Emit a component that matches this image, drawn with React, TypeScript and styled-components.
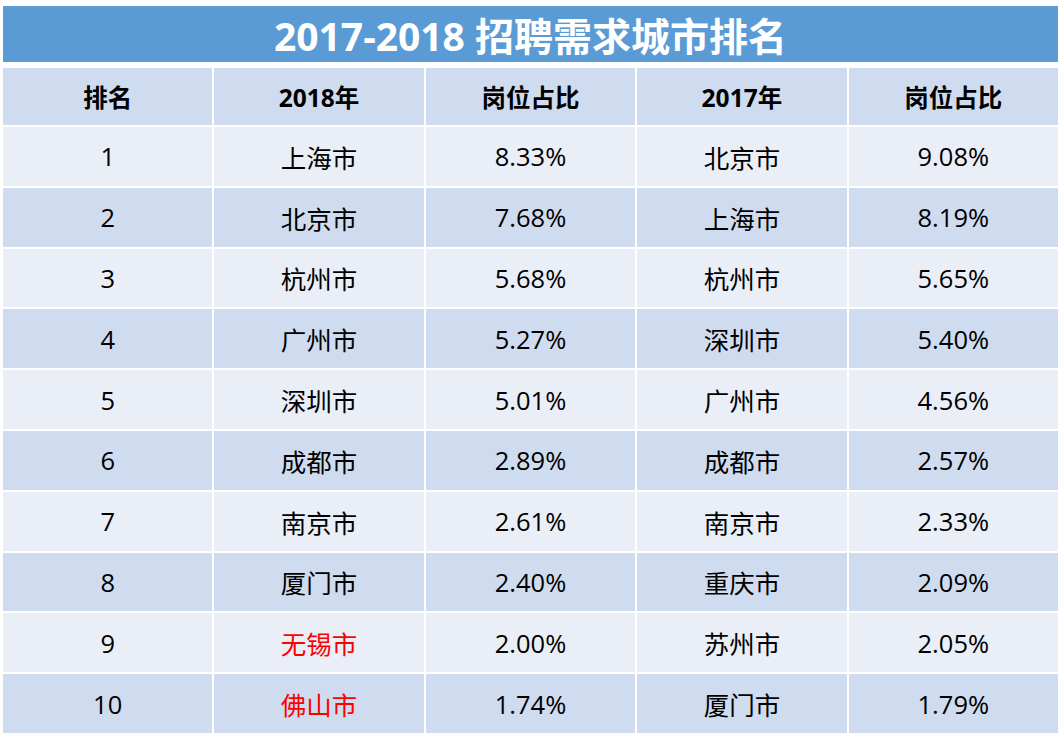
import styled, { createGlobalStyle } from "styled-components";

const GlobalStyle = createGlobalStyle`
  body {
    margin: 0;
    background: #ffffff;
    font-family: "Open Sans", "Noto Sans CJK SC", sans-serif;
  }
`;

// Whole page: title bar on top of the ranking table
const Page = styled.div`
  width: 1055px;
  padding: 6px 0 0 3px;
  display: flex;
  flex-direction: column;
  gap: 6px;
`;

const TitleBar = styled.div`
  height: 56px;
  background-color: #5b9bd5;
  color: #ffffff;
  font-size: 39px;
  font-weight: 700;
  display: flex;
  align-items: center;
  justify-content: center;
`;

const Table = styled.div`
  display: grid;
  grid-template-columns: repeat(5, 1fr);
  grid-template-rows: 57px;
  grid-auto-rows: 58.8px;
  gap: 2px;
`;

// One cell; shading alternates by row, header is bold
const Cell = styled.div<{ $shade: "dark" | "light"; $bold?: boolean; $red?: boolean }>`
  background-color: ${(p) => (p.$shade === "dark" ? "#cfdbee" : "#e9eef7")};
  color: ${(p) => (p.$red ? "#ff0000" : "#000000")};
  font-size: ${(p) => (p.$bold ? "24.5px" : "25.5px")};
  font-weight: ${(p) => (p.$bold ? 700 : 400)};
  display: flex;
  align-items: center;
  justify-content: center;
`;

interface Row {
  rank: number;
  city18: string;
  share18: string;
  city17: string;
  share17: string;
  red?: boolean;
}

const rows: Row[] = [
  { rank: 1, city18: "上海市", share18: "8.33%", city17: "北京市", share17: "9.08%" },
  { rank: 2, city18: "北京市", share18: "7.68%", city17: "上海市", share17: "8.19%" },
  { rank: 3, city18: "杭州市", share18: "5.68%", city17: "杭州市", share17: "5.65%" },
  { rank: 4, city18: "广州市", share18: "5.27%", city17: "深圳市", share17: "5.40%" },
  { rank: 5, city18: "深圳市", share18: "5.01%", city17: "广州市", share17: "4.56%" },
  { rank: 6, city18: "成都市", share18: "2.89%", city17: "成都市", share17: "2.57%" },
  { rank: 7, city18: "南京市", share18: "2.61%", city17: "南京市", share17: "2.33%" },
  { rank: 8, city18: "厦门市", share18: "2.40%", city17: "重庆市", share17: "2.09%" },
  { rank: 9, city18: "无锡市", share18: "2.00%", city17: "苏州市", share17: "2.05%", red: true },
  { rank: 10, city18: "佛山市", share18: "1.74%", city17: "厦门市", share17: "1.79%", red: true },
];

const headers = ["排名", "2018年", "岗位占比", "2017年", "岗位占比"];

export default function App() {
  return (
    <>
      <GlobalStyle />
      <Page>
        <TitleBar>2017-2018 招聘需求城市排名</TitleBar>
        <Table>
          {headers.map((h, i) => (
            <Cell key={"h" + i} $shade="dark" $bold>
              {h}
            </Cell>
          ))}
          {rows.map((r, i) => {
            const shade = i % 2 === 0 ? "light" : "dark";
            return [
              <Cell key={r.rank + "a"} $shade={shade}>{r.rank}</Cell>,
              <Cell key={r.rank + "b"} $shade={shade} $red={r.red}>{r.city18}</Cell>,
              <Cell key={r.rank + "c"} $shade={shade}>{r.share18}</Cell>,
              <Cell key={r.rank + "d"} $shade={shade}>{r.city17}</Cell>,
              <Cell key={r.rank + "e"} $shade={shade}>{r.share17}</Cell>,
            ];
          })}
        </Table>
      </Page>
    </>
  );
}
